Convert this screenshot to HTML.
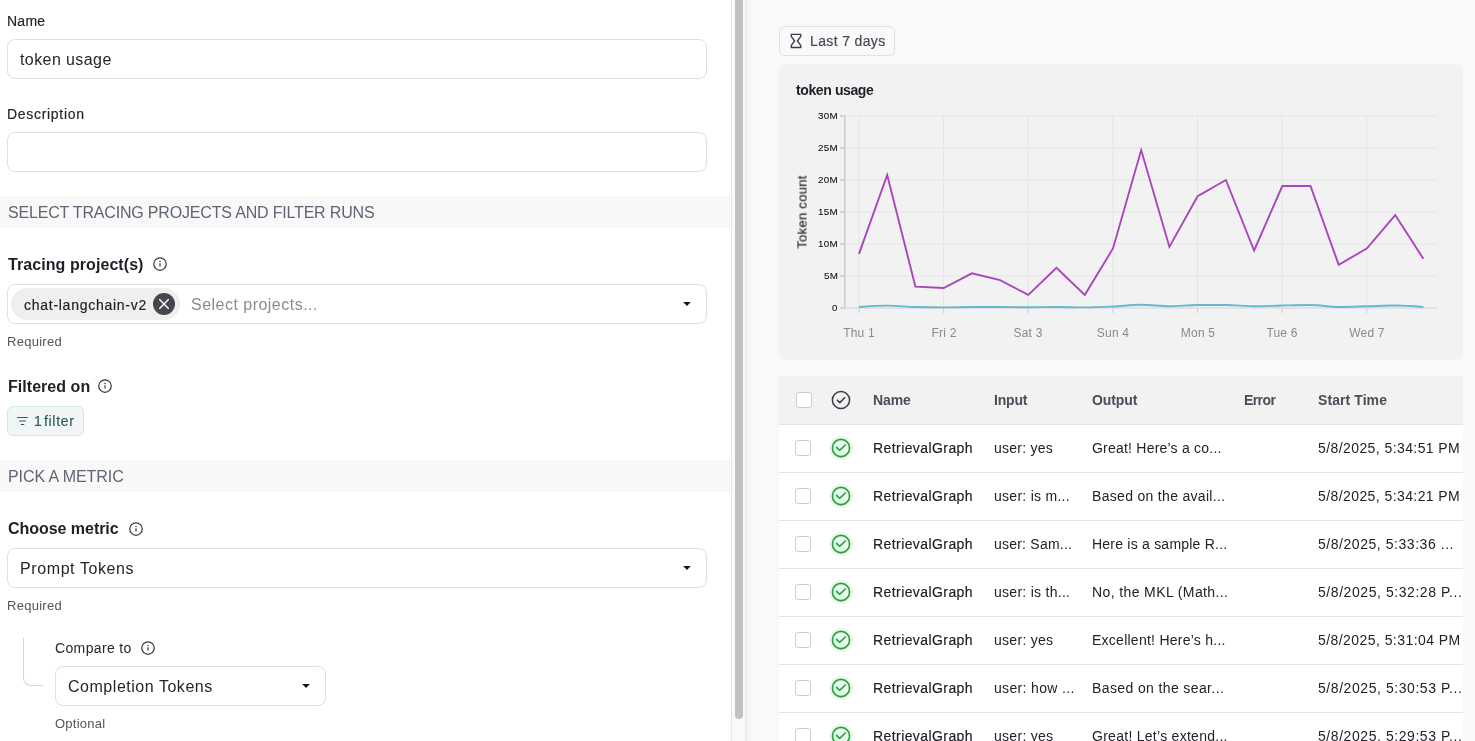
<!DOCTYPE html>
<html><head><meta charset="utf-8">
<style>
*{box-sizing:border-box;margin:0;padding:0}
html,body{width:1475px;height:741px;overflow:hidden;background:#fff;font-family:"Liberation Sans",sans-serif}
.t{position:absolute;white-space:nowrap;line-height:1;will-change:transform}
.b{position:absolute}
.ic{position:absolute;overflow:visible}
.inp{position:absolute;border:1px solid #dfdfe2;border-radius:8px;background:#fff}
</style></head><body>
<div class="b" style="left:0;top:0;width:731px;height:741px;background:#fff"></div>
<div class="t" style="left:6.9px;top:14.25px;font-size:14px;color:#25252d;-webkit-text-stroke:0.18px #25252d;letter-spacing:0.25px;">Name</div>
<div class="inp" style="left:7px;top:39px;width:700px;height:40px"></div>
<div class="t" style="left:20px;top:52.46px;font-size:16px;color:#25252d;letter-spacing:0.41px;">token usage</div>
<div class="t" style="left:6.9px;top:107.05px;font-size:14px;color:#25252d;-webkit-text-stroke:0.18px #25252d;letter-spacing:0.7px;">Description</div>
<div class="inp" style="left:7px;top:132px;width:700px;height:40px"></div>
<div class="b" style="left:0;top:196px;width:731px;height:32px;background:#f8f8f8"></div>
<div class="t" style="left:7.5px;top:205.06px;font-size:16px;color:#5e6574;letter-spacing:-0.18px;">SELECT TRACING PROJECTS AND FILTER RUNS</div>
<div class="t" style="left:8px;top:256.56px;font-size:16px;color:#1f1f27;font-weight:bold;letter-spacing:0.07px;">Tracing project(s)</div>
<svg class="ic" style="left:152px;top:255.89999999999998px" width="16" height="16" viewBox="0 0 16 16"><circle cx="8" cy="8" r="6.25" fill="none" stroke="#3a3a46" stroke-width="1.25"/><rect x="7.4" y="7.2" width="1.2" height="3.3" fill="#3a3a46"/><circle cx="8" cy="5.5" r="0.75" fill="#3a3a46"/></svg>
<div class="inp" style="left:7px;top:284px;width:700px;height:40px"></div>
<div class="b" style="left:11px;top:288px;width:169px;height:32px;border-radius:16px;background:#efeff0"></div>
<div class="t" style="left:23.5px;top:297.95px;font-size:14px;color:#222229;-webkit-text-stroke:0.18px #222229;letter-spacing:0.73px;">chat-langchain-v2</div>
<svg class="ic" style="left:153px;top:293px" width="22" height="22" viewBox="0 0 22 22"><circle cx="11" cy="11" r="11" fill="#47454f"/><path d="M6.6 6.6 L15.4 15.4 M15.4 6.6 L6.6 15.4" stroke="#fff" stroke-width="1.35" stroke-linecap="round"/></svg>
<div class="t" style="left:191.2px;top:297.06px;font-size:16px;color:#8b8b90;letter-spacing:0.48px;">Select projects...</div>
<svg class="ic" style="left:682.7px;top:302px" width="8" height="5" viewBox="0 0 8 5"><path d="M0.2 0.1 L7.8 0.1 L4 4.1 Z" fill="#141414"/></svg>
<div class="t" style="left:7.1px;top:334.60px;font-size:13px;color:#55555f;letter-spacing:0.27px;">Required</div>
<div class="t" style="left:7.7px;top:379.46px;font-size:16px;color:#1f1f27;font-weight:bold;letter-spacing:0.04px;">Filtered on</div>
<svg class="ic" style="left:97px;top:377.9px" width="16" height="16" viewBox="0 0 16 16"><circle cx="8" cy="8" r="6.25" fill="none" stroke="#3a3a46" stroke-width="1.25"/><rect x="7.4" y="7.2" width="1.2" height="3.3" fill="#3a3a46"/><circle cx="8" cy="5.5" r="0.75" fill="#3a3a46"/></svg>
<div class="b" style="left:7px;top:406px;width:77px;height:30px;border-radius:6px;background:#f0f6f5;border:1px solid #d3e8e4"></div>
<svg class="ic" style="left:16px;top:416px" width="13" height="10" viewBox="0 0 13 10"><path d="M1.5 1.5 H11.5 M3.5 5 H9.5 M5.2 8.5 H7.8" stroke="#2f615b" stroke-width="1.15" stroke-linecap="round"/></svg>
<div class="t" style="left:34.2px;top:414.05px;font-size:14px;color:#2d5c59;-webkit-text-stroke:0.18px #2d5c59;letter-spacing:0.0px;">1</div>
<div class="t" style="left:44.2px;top:414.05px;font-size:14px;color:#2d5c59;-webkit-text-stroke:0.18px #2d5c59;letter-spacing:0.68px;">filter</div>
<div class="b" style="left:0;top:460px;width:731px;height:32px;background:#f8f8f8"></div>
<div class="t" style="left:8px;top:469.06px;font-size:16px;color:#5e6574;letter-spacing:-0.06px;">PICK A METRIC</div>
<div class="t" style="left:8px;top:521.46px;font-size:16px;color:#1f1f27;font-weight:bold;letter-spacing:-0.04px;">Choose metric</div>
<svg class="ic" style="left:128px;top:520.5px" width="16" height="16" viewBox="0 0 16 16"><circle cx="8" cy="8" r="6.25" fill="none" stroke="#3a3a46" stroke-width="1.25"/><rect x="7.4" y="7.2" width="1.2" height="3.3" fill="#3a3a46"/><circle cx="8" cy="5.5" r="0.75" fill="#3a3a46"/></svg>
<div class="inp" style="left:7px;top:548px;width:700px;height:40px"></div>
<div class="t" style="left:19.6px;top:560.76px;font-size:16px;color:#25252d;letter-spacing:0.6px;">Prompt Tokens</div>
<svg class="ic" style="left:682.7px;top:566px" width="8" height="5" viewBox="0 0 8 5"><path d="M0.2 0.1 L7.8 0.1 L4 4.1 Z" fill="#141414"/></svg>
<div class="t" style="left:7.1px;top:599.30px;font-size:13px;color:#55555f;letter-spacing:0.27px;">Required</div>
<div class="b" style="left:23px;top:638px;width:20px;height:48px;border-left:1px solid #d4d4da;border-bottom:1px solid #d4d4da;border-bottom-left-radius:8px"></div>
<div class="t" style="left:55.3px;top:641.25px;font-size:14px;color:#25252d;letter-spacing:0.36px;">Compare to</div>
<svg class="ic" style="left:140px;top:640px" width="16" height="16" viewBox="0 0 16 16"><circle cx="8" cy="8" r="6.25" fill="none" stroke="#3a3a46" stroke-width="1.25"/><rect x="7.4" y="7.2" width="1.2" height="3.3" fill="#3a3a46"/><circle cx="8" cy="5.5" r="0.75" fill="#3a3a46"/></svg>
<div class="inp" style="left:55px;top:666px;width:271px;height:40px"></div>
<div class="t" style="left:67.9px;top:679.36px;font-size:16px;color:#25252d;letter-spacing:0.53px;">Completion Tokens</div>
<svg class="ic" style="left:301.5px;top:684px" width="8" height="5" viewBox="0 0 8 5"><path d="M0.2 0.1 L7.8 0.1 L4 4.1 Z" fill="#141414"/></svg>
<div class="t" style="left:55.3px;top:717.00px;font-size:13px;color:#55555f;letter-spacing:0.25px;">Optional</div>
<div class="b" style="left:731px;top:0;width:15px;height:741px;background:#f9f9f9;border-left:1px solid #e6e6e6;border-right:1px solid #ececec"></div>
<div class="b" style="left:735px;top:-10px;width:8px;height:729px;background:#c1c1c1;border-radius:4px"></div>
<div class="b" style="left:746px;top:0;width:729px;height:741px;background:#f9f9f9"></div>
<div class="b" style="left:746px;top:0;width:4px;height:741px;background:linear-gradient(to right,#efefef,#f9f9f9)"></div>
<div class="b" style="left:779px;top:26px;width:116px;height:30px;border:1px solid #e0e0e5;border-radius:6px;background:#f9f9f9"></div>
<svg class="ic" style="left:786px;top:30px" width="20" height="22" viewBox="0 0 20 22"><path d="M5.3 4.4 H14.8 V6.3 L11.4 11 L14.8 15.4 V17.5 H5.3 V15.4 L8.6 11 L5.3 6.3 Z" fill="none" stroke="#3d3d4a" stroke-width="1.35" stroke-linejoin="round"/></svg>
<div class="t" style="left:810.2px;top:34.05px;font-size:14px;color:#474755;-webkit-text-stroke:0.18px #474755;letter-spacing:0.36px;">Last 7 days</div>
<div class="b" style="left:779px;top:64px;width:684px;height:296px;background:#f2f2f2;border-radius:6px"></div>
<div class="t" style="left:795.6px;top:82.65px;font-size:14px;color:#1f1f27;font-weight:bold;letter-spacing:-0.39px;">token usage</div>
<svg class="ic" style="left:0;top:0" width="1475" height="741"><line x1="845.5" y1="116" x2="1437" y2="116" stroke="#e5e5e5" stroke-width="1"/><line x1="845.5" y1="148" x2="1437" y2="148" stroke="#e5e5e5" stroke-width="1"/><line x1="845.5" y1="180" x2="1437" y2="180" stroke="#e5e5e5" stroke-width="1"/><line x1="845.5" y1="212" x2="1437" y2="212" stroke="#e5e5e5" stroke-width="1"/><line x1="845.5" y1="244" x2="1437" y2="244" stroke="#e5e5e5" stroke-width="1"/><line x1="845.5" y1="276" x2="1437" y2="276" stroke="#e5e5e5" stroke-width="1"/><line x1="859.0" y1="116" x2="859.0" y2="308" stroke="#e5e5e5" stroke-width="1"/><line x1="943.6" y1="116" x2="943.6" y2="308" stroke="#e5e5e5" stroke-width="1"/><line x1="1028.2" y1="116" x2="1028.2" y2="308" stroke="#e5e5e5" stroke-width="1"/><line x1="1112.9" y1="116" x2="1112.9" y2="308" stroke="#e5e5e5" stroke-width="1"/><line x1="1197.5" y1="116" x2="1197.5" y2="308" stroke="#e5e5e5" stroke-width="1"/><line x1="1282.1" y1="116" x2="1282.1" y2="308" stroke="#e5e5e5" stroke-width="1"/><line x1="1366.7" y1="116" x2="1366.7" y2="308" stroke="#e5e5e5" stroke-width="1"/><line x1="844.8" y1="115.5" x2="844.8" y2="308.7" stroke="#c9cbd3" stroke-width="1.5"/><line x1="845" y1="308" x2="1437" y2="308" stroke="#dcdce2" stroke-width="1.5"/><line x1="840" y1="116" x2="845" y2="116" stroke="#c9cbd3" stroke-width="1.5"/><line x1="840" y1="148" x2="845" y2="148" stroke="#c9cbd3" stroke-width="1.5"/><line x1="840" y1="180" x2="845" y2="180" stroke="#c9cbd3" stroke-width="1.5"/><line x1="840" y1="212" x2="845" y2="212" stroke="#c9cbd3" stroke-width="1.5"/><line x1="840" y1="244" x2="845" y2="244" stroke="#c9cbd3" stroke-width="1.5"/><line x1="840" y1="276" x2="845" y2="276" stroke="#c9cbd3" stroke-width="1.5"/><line x1="840" y1="308" x2="845" y2="308" stroke="#c9cbd3" stroke-width="1.5"/><line x1="859.0" y1="308" x2="859.0" y2="313" stroke="#c9cbd3" stroke-width="1"/><line x1="943.6" y1="308" x2="943.6" y2="313" stroke="#c9cbd3" stroke-width="1"/><line x1="1028.2" y1="308" x2="1028.2" y2="313" stroke="#c9cbd3" stroke-width="1"/><line x1="1112.9" y1="308" x2="1112.9" y2="313" stroke="#c9cbd3" stroke-width="1"/><line x1="1197.5" y1="308" x2="1197.5" y2="313" stroke="#c9cbd3" stroke-width="1"/><line x1="1282.1" y1="308" x2="1282.1" y2="313" stroke="#c9cbd3" stroke-width="1"/><line x1="1366.7" y1="308" x2="1366.7" y2="313" stroke="#c9cbd3" stroke-width="1"/><path d="M859.00,307.00 C868.41,306.30 877.81,305.60 887.22,305.60 C896.63,305.60 906.03,306.73 915.44,307.00 C924.85,307.27 934.25,307.40 943.66,307.40 C953.07,307.40 962.47,307.00 971.88,307.00 C981.29,307.00 990.69,307.00 1000.10,307.00 C1009.51,307.00 1018.91,307.30 1028.32,307.30 C1037.73,307.30 1047.13,307.00 1056.54,307.00 C1065.95,307.00 1075.35,307.40 1084.76,307.40 C1094.17,307.40 1103.57,306.93 1112.98,306.50 C1122.39,306.07 1131.79,304.80 1141.20,304.80 C1150.61,304.80 1160.01,306.30 1169.42,306.30 C1178.83,306.30 1188.23,305.00 1197.64,305.00 C1207.05,305.00 1216.45,305.00 1225.86,305.00 C1235.27,305.00 1244.67,306.30 1254.08,306.30 C1263.49,306.30 1272.89,305.72 1282.30,305.50 C1291.71,305.28 1301.11,305.00 1310.52,305.00 C1319.93,305.00 1329.33,307.00 1338.74,307.00 C1348.15,307.00 1357.55,306.55 1366.96,306.30 C1376.37,306.05 1385.77,305.50 1395.18,305.50 C1404.59,305.50 1413.99,306.25 1423.40,307.00" fill="none" stroke="#64b9cc" stroke-width="1.9"/><polyline points="859.0,253.9 887.2,175.0 915.4,286.6 943.7,288.0 971.9,273.3 1000.1,280.2 1028.3,294.9 1056.5,267.8 1084.8,294.9 1113.0,248.4 1141.2,150.1 1169.4,246.9 1197.6,196.3 1225.9,180.0 1254.1,250.5 1282.3,186.0 1310.5,186.0 1338.7,264.9 1367.0,248.3 1395.2,215.1 1423.4,258.8" fill="none" stroke="#aa45bc" stroke-width="1.9" stroke-linejoin="miter"/></svg>
<div class="t" style="right:637.2px;top:110.70px;font-size:9.8px;letter-spacing:0.3px;color:#111;-webkit-text-stroke:0.08px #111">30M</div>
<div class="t" style="right:637.2px;top:142.70px;font-size:9.8px;letter-spacing:0.3px;color:#111;-webkit-text-stroke:0.08px #111">25M</div>
<div class="t" style="right:637.2px;top:174.70px;font-size:9.8px;letter-spacing:0.3px;color:#111;-webkit-text-stroke:0.08px #111">20M</div>
<div class="t" style="right:637.2px;top:206.70px;font-size:9.8px;letter-spacing:0.3px;color:#111;-webkit-text-stroke:0.08px #111">15M</div>
<div class="t" style="right:637.2px;top:238.70px;font-size:9.8px;letter-spacing:0.3px;color:#111;-webkit-text-stroke:0.08px #111">10M</div>
<div class="t" style="right:637.2px;top:270.70px;font-size:9.8px;letter-spacing:0.3px;color:#111;-webkit-text-stroke:0.08px #111">5M</div>
<div class="t" style="right:637.2px;top:302.70px;font-size:9.8px;letter-spacing:0.3px;color:#111;-webkit-text-stroke:0.08px #111">0</div>
<div class="t" style="left:819.0px;width:80px;text-align:center;top:326.54px;font-size:12px;color:#8a8a8e;letter-spacing:0.2px">Thu 1</div>
<div class="t" style="left:903.6px;width:80px;text-align:center;top:326.54px;font-size:12px;color:#8a8a8e;letter-spacing:0.2px">Fri 2</div>
<div class="t" style="left:988.2px;width:80px;text-align:center;top:326.54px;font-size:12px;color:#8a8a8e;letter-spacing:0.2px">Sat 3</div>
<div class="t" style="left:1072.9px;width:80px;text-align:center;top:326.54px;font-size:12px;color:#8a8a8e;letter-spacing:0.2px">Sun 4</div>
<div class="t" style="left:1157.5px;width:80px;text-align:center;top:326.54px;font-size:12px;color:#8a8a8e;letter-spacing:0.2px">Mon 5</div>
<div class="t" style="left:1242.1px;width:80px;text-align:center;top:326.54px;font-size:12px;color:#8a8a8e;letter-spacing:0.2px">Tue 6</div>
<div class="t" style="left:1326.7px;width:80px;text-align:center;top:326.54px;font-size:12px;color:#8a8a8e;letter-spacing:0.2px">Wed 7</div>
<div class="t" style="left:802px;top:212px;font-size:13px;color:#1a1a1a;-webkit-text-stroke:0.12px #1a1a1a;letter-spacing:0.3px;transform:translate(-50%,-50%) rotate(-90deg)">Token count</div>
<div class="b" style="left:779px;top:376px;width:684px;height:49px;background:#f2f2f2;border-bottom:1px solid #e3e3e6"></div>
<div class="b" style="left:779px;top:425px;width:684px;height:48px;background:#fff;border-bottom:1px solid #e3e3e6"></div>
<div class="b" style="left:779px;top:473px;width:684px;height:48px;background:#fff;border-bottom:1px solid #e3e3e6"></div>
<div class="b" style="left:779px;top:521px;width:684px;height:48px;background:#fff;border-bottom:1px solid #e3e3e6"></div>
<div class="b" style="left:779px;top:569px;width:684px;height:48px;background:#fff;border-bottom:1px solid #e3e3e6"></div>
<div class="b" style="left:779px;top:617px;width:684px;height:48px;background:#fff;border-bottom:1px solid #e3e3e6"></div>
<div class="b" style="left:779px;top:665px;width:684px;height:48px;background:#fff;border-bottom:1px solid #e3e3e6"></div>
<div class="b" style="left:779px;top:713px;width:684px;height:48px;background:#fff;border-bottom:1px solid #e3e3e6"></div>
<div class="b" style="left:796px;top:392px;width:16px;height:16px;border:1px solid #cdcdd5;border-radius:3px;background:#fff"></div>
<svg class="ic" style="left:831px;top:390px" width="20" height="20" viewBox="0 0 20 20"><circle cx="10" cy="10" r="8.6" fill="none" stroke="#3a3a48" stroke-width="1.5"/><path d="M6.3 10.2 L8.8 12.6 L13.7 7.7" fill="none" stroke="#3a3a48" stroke-width="1.5" stroke-linecap="round" stroke-linejoin="round"/></svg>
<div class="t" style="left:873.4px;top:393.15px;font-size:14px;color:#4c4c5a;font-weight:bold;letter-spacing:-0.08px;">Name</div>
<div class="t" style="left:993.5px;top:393.15px;font-size:14px;color:#4c4c5a;font-weight:bold;letter-spacing:-0.2px;">Input</div>
<div class="t" style="left:1092.4px;top:393.15px;font-size:14px;color:#4c4c5a;font-weight:bold;letter-spacing:-0.08px;">Output</div>
<div class="t" style="left:1244.2px;top:393.15px;font-size:14px;color:#4c4c5a;font-weight:bold;letter-spacing:-0.6px;">Error</div>
<div class="t" style="left:1318.3px;top:393.15px;font-size:14px;color:#4c4c5a;font-weight:bold;letter-spacing:0.08px;">Start Time</div>
<div class="b" style="left:795px;top:440px;width:16px;height:16px;border:1px solid #cdcdd5;border-radius:3px;background:#fff"></div>
<svg class="ic" style="left:829px;top:436px" width="24" height="24" viewBox="0 0 24 24"><circle cx="12" cy="12" r="12" fill="#ebf9ed"/><circle cx="12" cy="12" r="8.6" fill="none" stroke="#1fa33a" stroke-width="1.6"/><path d="M7.6 11.4 L10.6 14.3 L16.3 9.0" fill="none" stroke="#1fa33a" stroke-width="1.6" stroke-linecap="round" stroke-linejoin="round"/></svg>
<div class="t" style="left:873.4px;top:440.85px;font-size:14px;color:#22222a;-webkit-text-stroke:0.18px #22222a;letter-spacing:0.42px;">RetrievalGraph</div>
<div class="t" style="left:994.0px;top:440.85px;font-size:14px;color:#22222a;letter-spacing:0.238px;">user: yes</div>
<div class="t" style="left:1092.0px;top:440.85px;font-size:14px;color:#22222a;letter-spacing:0.219px;">Great! Here’s a co...</div>
<div class="t" style="left:1317.6px;top:440.85px;font-size:14px;color:#22222a;letter-spacing:0.415px;">5/8/2025, 5:34:51 PM</div>
<div class="b" style="left:795px;top:488px;width:16px;height:16px;border:1px solid #cdcdd5;border-radius:3px;background:#fff"></div>
<svg class="ic" style="left:829px;top:484px" width="24" height="24" viewBox="0 0 24 24"><circle cx="12" cy="12" r="12" fill="#ebf9ed"/><circle cx="12" cy="12" r="8.6" fill="none" stroke="#1fa33a" stroke-width="1.6"/><path d="M7.6 11.4 L10.6 14.3 L16.3 9.0" fill="none" stroke="#1fa33a" stroke-width="1.6" stroke-linecap="round" stroke-linejoin="round"/></svg>
<div class="t" style="left:873.4px;top:488.85px;font-size:14px;color:#22222a;-webkit-text-stroke:0.18px #22222a;letter-spacing:0.42px;">RetrievalGraph</div>
<div class="t" style="left:994.0px;top:488.85px;font-size:14px;color:#22222a;letter-spacing:0.27px;">user: is m...</div>
<div class="t" style="left:1092.0px;top:488.85px;font-size:14px;color:#22222a;letter-spacing:0.311px;">Based on the avail...</div>
<div class="t" style="left:1317.6px;top:488.85px;font-size:14px;color:#22222a;letter-spacing:0.415px;">5/8/2025, 5:34:21 PM</div>
<div class="b" style="left:795px;top:536px;width:16px;height:16px;border:1px solid #cdcdd5;border-radius:3px;background:#fff"></div>
<svg class="ic" style="left:829px;top:532px" width="24" height="24" viewBox="0 0 24 24"><circle cx="12" cy="12" r="12" fill="#ebf9ed"/><circle cx="12" cy="12" r="8.6" fill="none" stroke="#1fa33a" stroke-width="1.6"/><path d="M7.6 11.4 L10.6 14.3 L16.3 9.0" fill="none" stroke="#1fa33a" stroke-width="1.6" stroke-linecap="round" stroke-linejoin="round"/></svg>
<div class="t" style="left:873.4px;top:536.85px;font-size:14px;color:#22222a;-webkit-text-stroke:0.18px #22222a;letter-spacing:0.42px;">RetrievalGraph</div>
<div class="t" style="left:994.0px;top:536.85px;font-size:14px;color:#22222a;letter-spacing:0.22px;">user: Sam...</div>
<div class="t" style="left:1092.0px;top:536.85px;font-size:14px;color:#22222a;letter-spacing:0.224px;">Here is a sample R...</div>
<div class="t" style="left:1317.6px;top:536.85px;font-size:14px;color:#22222a;letter-spacing:0.547px;">5/8/2025, 5:33:36 ...</div>
<div class="b" style="left:795px;top:584px;width:16px;height:16px;border:1px solid #cdcdd5;border-radius:3px;background:#fff"></div>
<svg class="ic" style="left:829px;top:580px" width="24" height="24" viewBox="0 0 24 24"><circle cx="12" cy="12" r="12" fill="#ebf9ed"/><circle cx="12" cy="12" r="8.6" fill="none" stroke="#1fa33a" stroke-width="1.6"/><path d="M7.6 11.4 L10.6 14.3 L16.3 9.0" fill="none" stroke="#1fa33a" stroke-width="1.6" stroke-linecap="round" stroke-linejoin="round"/></svg>
<div class="t" style="left:873.4px;top:584.85px;font-size:14px;color:#22222a;-webkit-text-stroke:0.18px #22222a;letter-spacing:0.42px;">RetrievalGraph</div>
<div class="t" style="left:994.0px;top:584.85px;font-size:14px;color:#22222a;letter-spacing:0.279px;">user: is th...</div>
<div class="t" style="left:1092.0px;top:584.85px;font-size:14px;color:#22222a;letter-spacing:0.386px;">No, the MKL (Math...</div>
<div class="t" style="left:1317.6px;top:584.85px;font-size:14px;color:#22222a;letter-spacing:0.562px;">5/8/2025, 5:32:28 P...</div>
<div class="b" style="left:795px;top:632px;width:16px;height:16px;border:1px solid #cdcdd5;border-radius:3px;background:#fff"></div>
<svg class="ic" style="left:829px;top:628px" width="24" height="24" viewBox="0 0 24 24"><circle cx="12" cy="12" r="12" fill="#ebf9ed"/><circle cx="12" cy="12" r="8.6" fill="none" stroke="#1fa33a" stroke-width="1.6"/><path d="M7.6 11.4 L10.6 14.3 L16.3 9.0" fill="none" stroke="#1fa33a" stroke-width="1.6" stroke-linecap="round" stroke-linejoin="round"/></svg>
<div class="t" style="left:873.4px;top:632.85px;font-size:14px;color:#22222a;-webkit-text-stroke:0.18px #22222a;letter-spacing:0.42px;">RetrievalGraph</div>
<div class="t" style="left:994.0px;top:632.85px;font-size:14px;color:#22222a;letter-spacing:0.288px;">user: yes</div>
<div class="t" style="left:1092.0px;top:632.85px;font-size:14px;color:#22222a;letter-spacing:0.255px;">Excellent! Here’s h...</div>
<div class="t" style="left:1317.6px;top:632.85px;font-size:14px;color:#22222a;letter-spacing:0.436px;">5/8/2025, 5:31:04 PM</div>
<div class="b" style="left:795px;top:680px;width:16px;height:16px;border:1px solid #cdcdd5;border-radius:3px;background:#fff"></div>
<svg class="ic" style="left:829px;top:676px" width="24" height="24" viewBox="0 0 24 24"><circle cx="12" cy="12" r="12" fill="#ebf9ed"/><circle cx="12" cy="12" r="8.6" fill="none" stroke="#1fa33a" stroke-width="1.6"/><path d="M7.6 11.4 L10.6 14.3 L16.3 9.0" fill="none" stroke="#1fa33a" stroke-width="1.6" stroke-linecap="round" stroke-linejoin="round"/></svg>
<div class="t" style="left:873.4px;top:680.85px;font-size:14px;color:#22222a;-webkit-text-stroke:0.18px #22222a;letter-spacing:0.42px;">RetrievalGraph</div>
<div class="t" style="left:994.0px;top:680.85px;font-size:14px;color:#22222a;letter-spacing:0.336px;">user: how ...</div>
<div class="t" style="left:1092.0px;top:680.85px;font-size:14px;color:#22222a;letter-spacing:0.382px;">Based on the sear...</div>
<div class="t" style="left:1317.6px;top:680.85px;font-size:14px;color:#22222a;letter-spacing:0.562px;">5/8/2025, 5:30:53 P...</div>
<div class="b" style="left:795px;top:728px;width:16px;height:16px;border:1px solid #cdcdd5;border-radius:3px;background:#fff"></div>
<svg class="ic" style="left:829px;top:724px" width="24" height="24" viewBox="0 0 24 24"><circle cx="12" cy="12" r="12" fill="#ebf9ed"/><circle cx="12" cy="12" r="8.6" fill="none" stroke="#1fa33a" stroke-width="1.6"/><path d="M7.6 11.4 L10.6 14.3 L16.3 9.0" fill="none" stroke="#1fa33a" stroke-width="1.6" stroke-linecap="round" stroke-linejoin="round"/></svg>
<div class="t" style="left:873.4px;top:728.85px;font-size:14px;color:#22222a;-webkit-text-stroke:0.18px #22222a;letter-spacing:0.42px;">RetrievalGraph</div>
<div class="t" style="left:994.0px;top:728.85px;font-size:14px;color:#22222a;letter-spacing:0.288px;">user: yes</div>
<div class="t" style="left:1092.0px;top:728.85px;font-size:14px;color:#22222a;letter-spacing:0.275px;">Great! Let’s extend...</div>
<div class="t" style="left:1317.6px;top:728.85px;font-size:14px;color:#22222a;letter-spacing:0.562px;">5/8/2025, 5:29:53 P...</div>
</body></html>
